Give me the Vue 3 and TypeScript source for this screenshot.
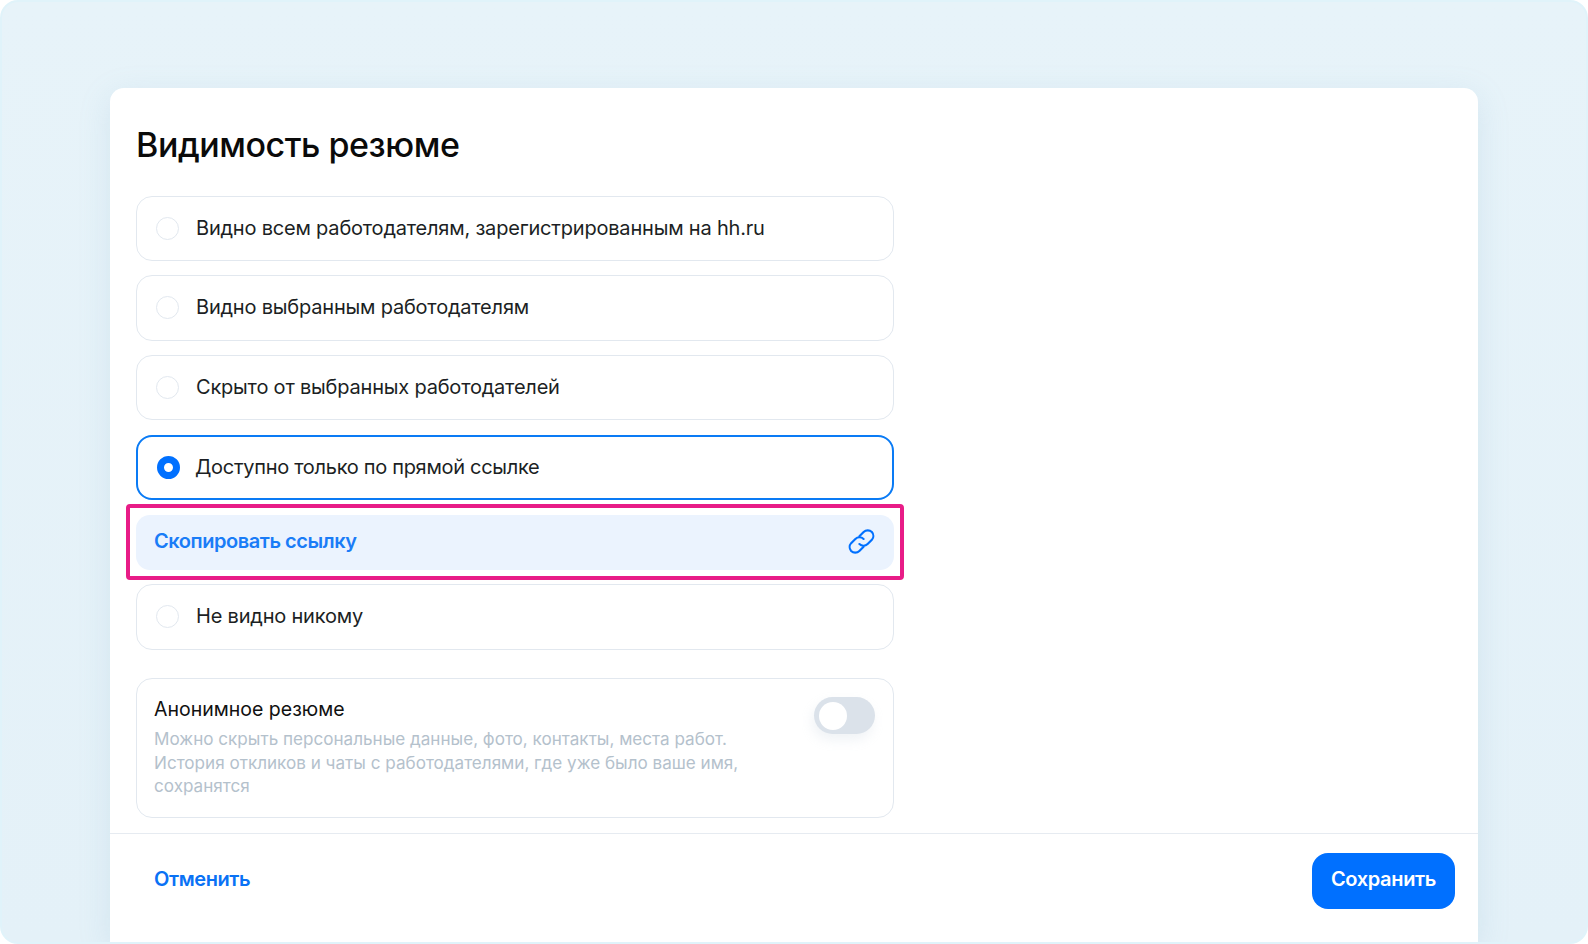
<script setup lang="ts">
interface Option { label: string; active?: boolean; link?: boolean }
const options: Option[] = [
  { label: 'Видно всем работодателям, зарегистрированным на hh.ru' },
  { label: 'Видно выбранным работодателям' },
  { label: 'Скрыто от выбранных работодателей' },
  { label: 'Доступно только по прямой ссылке', active: true, link: true },
  { label: 'Не видно никому' },
]
</script>

<template>
  <div class="page">
    <section class="card">
      <div class="body">
        <h1 class="title">Видимость резюме</h1>
        <div class="options">
          <template v-for="o in options" :key="o.label">
            <div class="option" :class="{ active: o.active }">
              <span class="radio"></span>
              <span class="option-text">{{ o.label }}</span>
            </div>
            <div v-if="o.link" class="copy">
              <span class="highlight"></span>
              <span class="copy-text">Скопировать ссылку</span>
              <svg class="link-icon" width="33" height="33" viewBox="0 0 28 28" fill="none" stroke="#0070ff" stroke-width="1.8" stroke-linecap="round">
                <path d="M12.2 9.6 15.8 6a5 5 0 0 1 7 0 5 5 0 0 1 0 6.6l-3.6 3.6a5 5 0 0 1-7 0" />
                <path d="M15.8 18.4 12.2 22a5 5 0 0 1-7 0 5 5 0 0 1 0-6.6l3.6-3.6a5 5 0 0 1 7 0" />
              </svg>
            </div>
          </template>
        </div>
        <div class="anon">
          <div class="anon-text">
            <div class="anon-title">Анонимное резюме</div>
            <p class="anon-desc">Можно скрыть персональные данные, фото, контакты, места работ. История откликов и чаты с работодателями, где уже было ваше имя, сохранятся</p>
          </div>
          <span class="toggle"><span class="knob"></span></span>
        </div>
      </div>
      <footer class="footer">
        <span class="cancel">Отменить</span>
        <span class="save">Сохранить</span>
      </footer>
    </section>
  </div>
</template>

<style scoped>
.page {
  box-sizing: border-box;
  width: 1588px;
  height: 944px;
  padding: 86px 0 0 108px;
  overflow: hidden;
  border: 2px solid #e0f3fa;
  border-radius: 18px;
  background: linear-gradient(180deg, #e7f3f9 0%, #e4f1f8 100%);
  font-family: Inter, "Noto Sans", sans-serif;
}
.card {
  display: flex;
  flex-direction: column;
  box-sizing: border-box;
  width: 1368px;
  height: 854px;
  border-radius: 14px 14px 0 0;
  background: #fff;
  box-shadow: 0 8px 32px rgba(120, 170, 200, 0.18);
}
.body {
  flex: 1;
  padding: 37px 26px 0;
}
.title {
  margin: 0 0 30.5px;
  font-size: 34px;
  line-height: 40px;
  font-weight: 550;
  letter-spacing: -0.45px;
  color: #0a0a0a;
}
.options {
  display: flex;
  flex-direction: column;
  width: 758px;
}
.option {
  display: flex;
  align-items: center;
  box-sizing: border-box;
  height: 65.5px;
  margin-bottom: 14.2px;
  padding: 0 19px;
  border: 1.5px solid #e2e8ef;
  border-radius: 16px;
}
.option.active {
  margin-bottom: 14.5px;
  padding-left: 18.5px;
  border: 2px solid #0a7bf5;
}
.radio {
  box-sizing: border-box;
  width: 23px;
  height: 23px;
  margin-right: 17px;
  border: 1.5px solid #e2e8ef;
  border-radius: 50%;
}
.active .radio {
  margin-right: 15.5px;
  border: 7px solid #0070ff;
}
.option-text {
  padding-bottom: 1px;
  font-size: 20px;
  line-height: 24px;
  letter-spacing: -0.2px;
  color: #1c1f24;
}
.active .option-text {
  letter-spacing: -0.3px;
}
.copy {
  position: relative;
  display: flex;
  align-items: center;
  justify-content: space-between;
  box-sizing: border-box;
  height: 55.5px;
  margin-bottom: 14px;
  padding: 0 16.5px 1px 18px;
  border-radius: 14px;
  background: #ebf3fe;
}
.highlight {
  position: absolute;
  top: -10.5px;
  right: -10px;
  bottom: -9.5px;
  left: -10px;
  border: 4px solid #e81c87;
  border-radius: 4px;
  pointer-events: none;
}
.copy-text {
  padding-bottom: 2px;
  font-size: 20px;
  font-weight: 600;
  letter-spacing: -0.45px;
  color: #1a7cf7;
}
.link-icon {
  display: block;
}
.anon {
  display: flex;
  justify-content: space-between;
  box-sizing: border-box;
  width: 758px;
  height: 140px;
  margin-top: 14.7px;
  padding: 16px 18px 0 17px;
  border: 1.5px solid #e2e8ef;
  border-radius: 16px;
}
.anon-text {
  width: 610px;
}
.anon-title {
  font-size: 19.5px;
  line-height: 28px;
  color: #111;
}
.anon-desc {
  margin: 4px 0 0;
  font-size: 17.1px;
  line-height: 23.3px;
  color: #b4c1cc;
}
.toggle {
  display: flex;
  align-items: center;
  box-sizing: border-box;
  width: 61px;
  height: 37px;
  margin-top: 2px;
  padding: 0 5px;
  border-radius: 19px;
  background: #dbe2ea;
  box-shadow: -2px 6px 12px rgba(180, 195, 210, 0.2);
}
.knob {
  width: 28px;
  height: 28px;
  border-radius: 50%;
  background: #fff;
}
.footer {
  display: flex;
  align-items: center;
  justify-content: space-between;
  box-sizing: border-box;
  height: 109px;
  padding: 0 23px 15px 44px;
  border-top: 1.5px solid #e6ebf1;
}
.cancel {
  padding-bottom: 3px;
  font-size: 20px;
  font-weight: 600;
  letter-spacing: -0.4px;
  color: #0a72f5;
}
.save {
  display: flex;
  align-items: center;
  justify-content: center;
  width: 143px;
  height: 56px;
  padding-bottom: 4px;
  box-sizing: border-box;
  border-radius: 16px;
  background: #0070ff;
  font-size: 20px;
  font-weight: 600;
  letter-spacing: -0.35px;
  color: #fff;
}
</style>
